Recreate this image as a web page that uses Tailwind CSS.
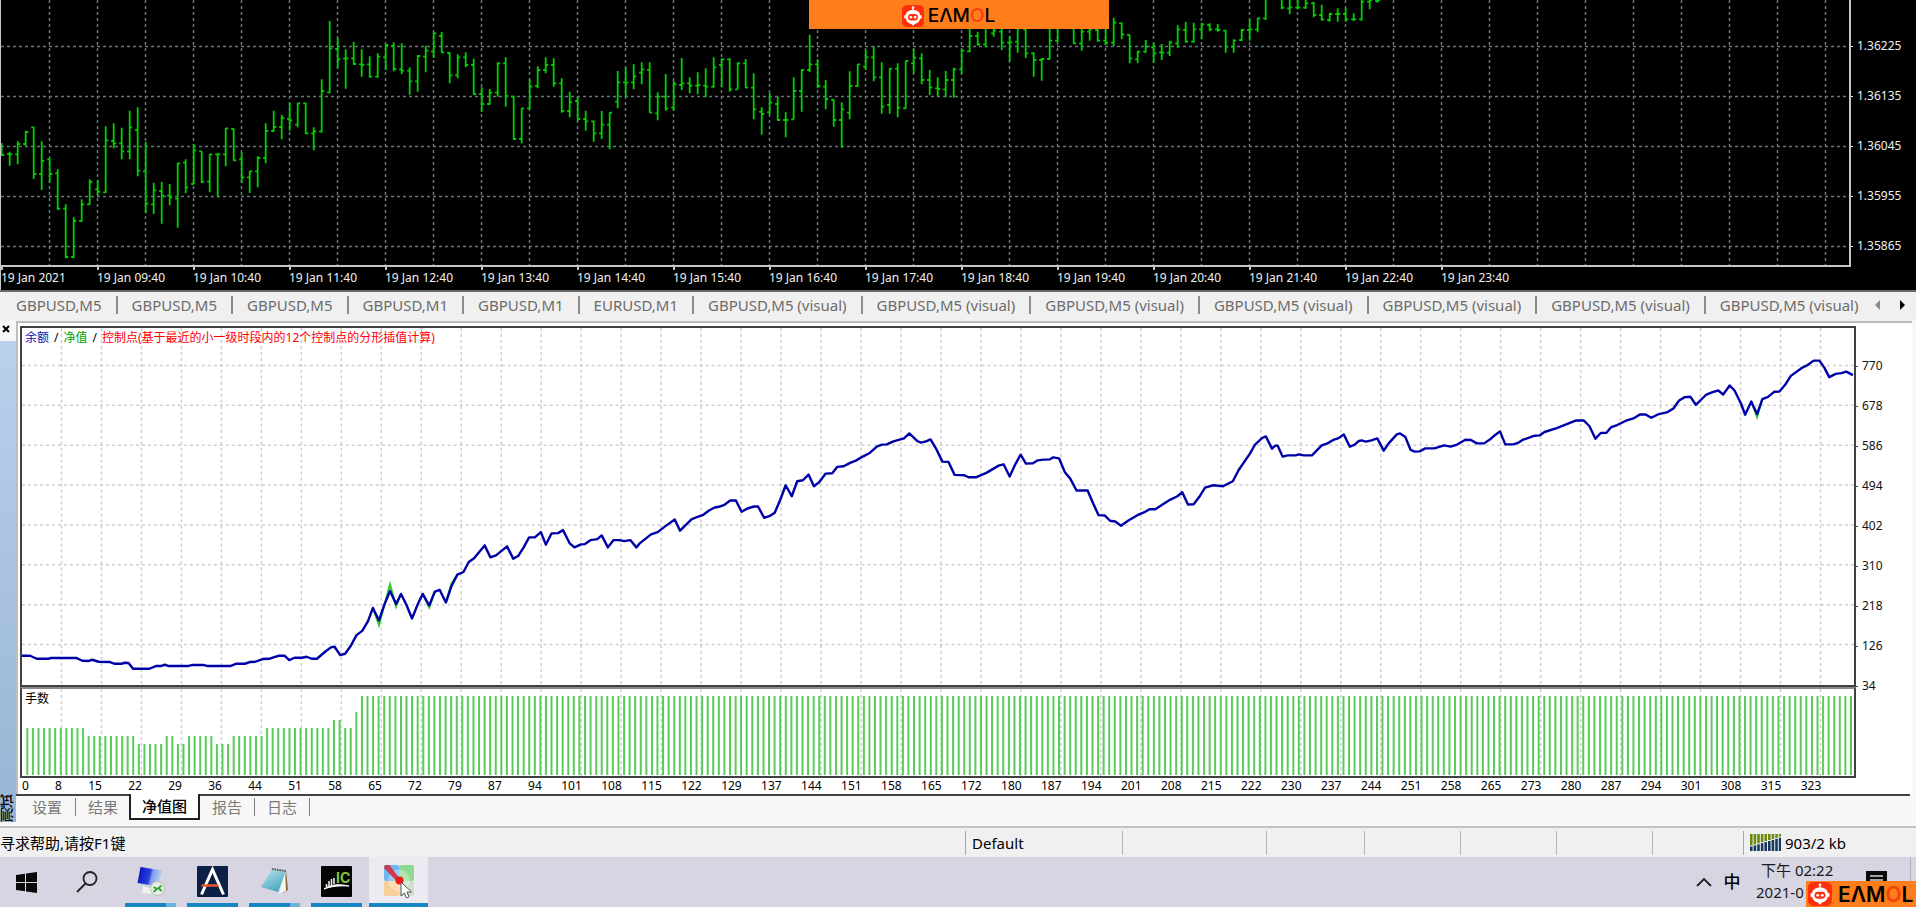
<!DOCTYPE html>
<html lang="zh-CN">
<head>
<meta charset="utf-8">
<meta name="viewport" content="width=device-width, initial-scale=1">
<title>GBPUSD,M5</title>
<script src="https://cdn.jsdelivr.net/npm/@tailwindcss/browser@4"></script>
</head>
<body class="relative flex h-screen flex-col overflow-hidden bg-[#f0f0f0] font-['Noto_Sans','Noto_Sans_CJK_SC',sans-serif] text-black">

<svg class="hidden" aria-hidden="true">
  <symbol id="robot" viewBox="0 0 22 22">
    <rect width="22" height="22" rx="5" fill="#ff2f0a"/>
    <circle cx="11" cy="2.600" r="1.3" fill="#fff"/>
    <path d="M10.4 2.500h1.200v4h-1.200z" fill="#fff"/>
    <path d="M11 5c4.600 0 6.900 2.400 7.300 5.200h1.400v3.400h-1.500c-.600 3-2.900 5.100-5.400 5.300L11 20.800l-1.800-1.900C6.700 18.700 4.400 16.600 3.800 13.600H2.300v-3.400h1.400C4.100 7.400 6.400 5 11 5z" fill="#fff"/>
    <rect x="6" y="9" width="10" height="6.400" rx="3.200" fill="#ff2f0a"/>
    <circle cx="8.900" cy="12.200" r="1.300" fill="#fff"/><circle cx="13.100" cy="12.200" r="1.300" fill="#fff"/>
  </symbol>
</svg>

<!-- Price chart -->
<section class="relative flex h-[290px] shrink-0 flex-col border-l border-[#c8c8c8] bg-black text-[12px] leading-4 text-[#f0f0f0]">
  <div class="flex h-[267px]">
    <svg id="price" class="h-full min-w-0 flex-1 border-r-2 border-b-2 border-[#c4c4c4]" role="img" aria-label="GBPUSD M5"></svg>
    <div class="flex w-[65px] shrink-0 flex-col *:flex *:before:mt-2 *:before:mr-1 *:before:h-px *:before:w-0.5 *:before:bg-[#e0e0e0]">
      <span class="-mt-3 h-[50px]">1.36315</span>
      <span class="h-[50px]">1.36225</span>
      <span class="h-[50px]">1.36135</span>
      <span class="h-[50px]">1.36045</span>
      <span class="h-[50px]">1.35955</span>
      <span>1.35865</span>
    </div>
  </div>
  <div id="times" class="flex overflow-hidden whitespace-nowrap"></div>
  <a href="#" class="absolute inset-x-0 top-0 mx-auto flex h-[29px] w-[300px] items-center justify-center gap-1 bg-[#ff7d1a] pt-0.5 pr-5" aria-label="EAMOL">
    <svg class="size-[22px]"><use href="#robot"/></svg>
    <span class="font-['Inter',sans-serif] text-[19px] leading-none font-medium text-black">EΛM<span class="text-[#f5420c]">O</span>L</span>
  </a>
</section>

<!-- Chart tabs -->
<nav class="flex h-[31px] shrink-0 items-center overflow-hidden border-t-2 border-[#6a6a6a] bg-[#f0f0f0] pb-1 text-[#6c6c6c]">
  <div id="tabs" class="flex min-w-0 flex-1 items-center overflow-hidden whitespace-nowrap"></div>
  <button class="pr-2" aria-label="前"><svg class="h-3 w-2" viewBox="0 0 8 12"><path d="M6 1v10L1 6z" fill="#8a8a8a"/></svg></button>
  <button class="mr-1.5 pr-1 pl-2" aria-label="后"><svg class="h-3 w-2" viewBox="0 0 8 12"><path d="M2 1v10l5-5z" fill="#000"/></svg></button>
</nav>

<!-- Tester panel -->
<section class="flex min-h-0 flex-1 bg-[#f7f7f7]">
  <div class="flex w-4 shrink-0 flex-col">
    <button class="flex h-5 items-start justify-center pt-1 pr-1" aria-label="关闭"><svg class="size-2" viewBox="0 0 8 8"><path d="M1 1l6 6M7 1L1 7" stroke="#000" stroke-width="2"/></svg></button>
    <div class="mb-1 flex flex-1 items-end bg-linear-to-b from-[#b9d1eb] to-[#98b4d4]">
      <span class="w-4 rotate-180 text-[14px] leading-4 font-medium [writing-mode:vertical-rl]">测试</span>
    </div>
  </div>
  <div class="flex min-w-0 flex-1 flex-col">
    <div class="mr-1 flex min-h-0 flex-1 border-t-2 border-l-2 border-[#bdbdbd] bg-white pt-[3px] pl-0.5">
      <div class="flex min-w-0 flex-1 flex-col">
        <div class="relative flex-[361] border-2 border-[#404040]">
          <svg id="equity" class="absolute inset-0 size-full" viewBox="22 328 1833 358" preserveAspectRatio="none" role="img" aria-label="净值图"></svg>
          <p class="relative flex gap-[5px] pt-0.5 pl-[3px] text-[12px] leading-4"><span class="text-[#1010b0]">余额</span> / <span class="text-[#00a000]">净值</span> / <span class="text-[#ff0000]">控制点(基于最近的小一级时段内的12个控制点的分形插值计算)</span></p>
        </div>
        <div class="relative flex-[88] border-2 border-[#404040] border-t-[#8a8a8a]">
          <svg id="lots" class="absolute inset-0 size-full" viewBox="22 688 1833 87" preserveAspectRatio="none" role="img" aria-label="手数"></svg>
          <p class="relative pt-0.5 pl-[3px] text-[12px] leading-4">手数</p>
        </div>
        <div id="trades" class="flex text-[12px] leading-4"></div>
      </div>
      <div class="flex w-[56px] shrink-0 flex-col text-[12px] text-[#111]">
        <div class="flex-[20]"></div>
        <div id="levels" class="flex flex-[360] flex-col"></div>
        <div class="flex-[88]"></div>
      </div>
    </div>
    <div class="mr-1.5 flex h-[26px] shrink-0 border-t-2 border-[#404040] text-[15px] leading-[22px] text-[#7a7a7a]">
      <div class="flex items-center pb-0.5">
        <button class="px-[13px] pl-4">设置</button><i class="h-[18px] w-px bg-[#808080]"></i>
        <button class="px-3 pr-[11px]">结果</button>
      </div>
      <button class="-mt-0.5 w-[71px] border-2 border-t-0 border-[#202020] bg-white font-medium text-black">净值图</button>
      <div class="flex items-center pb-0.5">
        <button class="px-3">报告</button><i class="h-[18px] w-px bg-[#808080]"></i>
        <button class="px-3">日志</button><i class="h-[18px] w-px bg-[#808080]"></i>
      </div>
    </div>
    <div class="h-1.5 shrink-0"></div>
  </div>
</section>

<!-- Status bar -->
<footer class="flex h-[31px] shrink-0 items-center border-t-2 border-[#c2c2c2] bg-[#f0f0f0] text-[15px] whitespace-nowrap *:h-6 *:leading-6">
  <span class="min-w-0 flex-1">寻求帮助,请按F1键</span>
  <span class="w-[157px] border-l border-[#a8a8a8] pl-1.5">Default</span>
  <span class="w-36 border-l border-[#b4b4b4]"></span>
  <span class="w-[98px] border-l border-[#b4b4b4]"></span>
  <span class="w-24 border-l border-[#b4b4b4]"></span>
  <span class="w-24 border-l border-[#b4b4b4]"></span>
  <span class="w-24 border-l border-[#b4b4b4]"></span>
  <span class="w-[91px] border-l border-[#b4b4b4]"></span>
  <span class="flex w-[173px] items-center gap-1 border-l border-[#a8a8a8] pl-[5px]"><svg id="traffic" class="h-[17px] w-8 shrink-0"></svg>903/2 kb</span>
</footer>

<!-- Taskbar -->
<div class="flex h-[50px] shrink-0 items-stretch bg-[#d6d5e1]">
  <button class="flex w-[52px] items-center justify-center" aria-label="开始">
    <svg class="size-[21px]" viewBox="0 0 21 21"><path d="M0 3l9-1.300v8.300H0zM10 1.500L21 0v10H10zM0 11h9v8.300L0 18zM10 11h11v10l-11-1.500z" fill="#0a0a0a"/></svg>
  </button>
  <button class="flex w-[70px] items-center justify-center" aria-label="搜索">
    <svg class="size-[22px]" viewBox="0 0 22 22" fill="none" stroke="#222" stroke-width="1.800"><circle cx="14" cy="7.500" r="6.500"/><path d="M9.500 12.500L1 21"/></svg>
  </button>
  <button class="relative ml-[3px] flex w-[51px] items-center justify-center border-b-4 border-[#1686c4] pt-0.5" aria-label="远程桌面">
    <svg class="size-8" viewBox="0 0 32 32">
      <defs><linearGradient id="scr" x1="0" x2="1" y1="0.300" y2="0.500"><stop offset="0" stop-color="#0a10c0"/><stop offset=".5" stop-color="#2a40dc"/><stop offset=".6" stop-color="#7d9cec"/><stop offset="1" stop-color="#c4d4f6"/></linearGradient></defs>
      <path d="M8 21l11 2 3 6-15-1z" fill="#f0f1ee"/><path d="M4 1l25 4-4 20L1 20z" fill="#d3d7d6"/>
      <path d="M5.500 2l21.500 3.500-3.500 16L2.500 18z" fill="url(#scr)"/>
      <circle cx="22.500" cy="23.500" r="7" fill="#e8ece6" stroke="#b8beb6"/><path d="M18.500 22l3.500 2-3.500 3M26.500 20.500l-3 2.500 3 3" fill="none" stroke="#2aa52a" stroke-width="1.800"/>
    </svg>
    <i class="absolute right-0 -bottom-1 h-1 w-[10px] bg-[#69b3dc]"></i>
  </button>
  <button class="ml-[11px] flex w-[51px] items-center justify-center border-b-4 border-[#1686c4] pt-0.5" aria-label="A">
    <svg class="size-[31px]" viewBox="0 0 31 31"><rect width="31" height="31" rx="1" fill="#0c1f44"/><path d="M4.500 28.500L15.500 3.500l11 25" fill="none" stroke="#fff" stroke-width="3"/><path d="M4.500 19.500h17" stroke="#f0562a" stroke-width="2.500"/></svg>
  </button>
  <button class="relative ml-[11px] flex w-[51px] items-center justify-center border-b-4 border-[#1686c4] pt-0.5" aria-label="记事本">
    <svg class="size-[30px]" viewBox="0 0 30 30">
      <defs><linearGradient id="np" x1="0" x2="0.600" y1="0" y2="1"><stop offset="0" stop-color="#c4e8f0"/><stop offset="1" stop-color="#45a5bc"/></linearGradient></defs>
      <path d="M26 4l2 20-5 3z" fill="#8a6a3a"/><path d="M25 4l1 21-7 3z" fill="#f4f6f4"/><path d="M12 3l14 2-8 21L1 21z" fill="url(#np)"/><path d="M12 3l14 2" stroke="#555" stroke-width="2" stroke-dasharray="1.500 1"/>
    </svg>
    <i class="absolute right-0 -bottom-1 h-1 w-[10px] bg-[#69b3dc]"></i>
  </button>
  <button class="ml-[11px] flex w-[51px] items-center justify-center border-b-4 border-[#1686c4] pt-0.5" aria-label="IC">
    <svg class="size-[31px]" viewBox="0 0 31 31"><rect width="31" height="31" rx="1" fill="#050505"/><text x="15" y="17" font-family="Inter" font-size="14" font-weight="700" fill="#86c440">IC</text><path d="M5.500 21v-3M8 20v-5M10.500 19v-6M13 18v-6" stroke="#e8e8e8" stroke-width="1.600"/><path d="M3 23c7-5 16-5 25-3-9-.500-17 0-25 3z" fill="#fff" stroke="#fff"/></svg>
  </button>
  <button class="relative ml-[7px] flex w-[59px] items-center justify-center border-b-4 border-[#1686c4] bg-[#ebebf1] pt-0.5" aria-label="MetaTrader">
    <svg class="h-[34px] w-8 translate-y-px" viewBox="0 0 32 34">
      <rect x="1" width="15" height="16" rx="2" fill="#6db8f2"/><rect x="16" width="15" height="16" rx="2" fill="#8fd88f"/><rect x="1" y="16" width="15" height="15" rx="2" fill="#f8cf98"/><rect x="16" y="16" width="15" height="15" rx="2" fill="#cfe0cf"/>
      <circle cx="16" cy="15.500" r="11" fill="#fff" opacity=".3"/>
      <path d="M2 0l4.500 0L17 14l-3 2.500L1 3z" fill="#d03a50"/><circle cx="16.500" cy="15.500" r="4" fill="#f01818"/>
      <path d="M18 17v14l3.300-3 2.200 5 2.600-1.200-2.200-4.800h4.600z" fill="#fff" stroke="#555"/>
    </svg>
  </button>
  <div class="flex-1"></div>
  <button class="px-2" aria-label="显示隐藏的图标"><svg class="h-[10px] w-4" viewBox="0 0 16 10"><path d="M1 9l7-7 7 7" fill="none" stroke="#222" stroke-width="1.800"/></svg></button>
  <button class="w-6 text-[17px] font-medium">中</button>
  <div class="ml-3 flex w-[89px] flex-col items-start justify-center pb-0.5 text-[15px] leading-[22px] whitespace-nowrap text-[#1a1a1a]"><span class="pl-[5px]">下午 02:22</span><span>2021-0</span></div>
  <button class="flex w-[66px] items-start justify-center border-r border-[#b0b0bc] pt-3.5 pr-0.5" aria-label="通知"><svg class="h-5 w-[21px]" viewBox="0 0 21 20"><path d="M0 0h21v16H8l-4 4v-4H0z" fill="#0a0a0a"/><path d="M4 5h13M4 9h13" stroke="#d6d5e1" stroke-width="1.500"/></svg></button>
  <span class="w-[5px]"></span>
</div>

<a href="#" class="absolute right-0 bottom-0 flex h-[26px] w-[110px] items-center gap-1.5 bg-[#ff7d1a] pl-0.5" aria-label="EAMOL">
  <svg class="size-6 shrink-0"><use href="#robot"/></svg>
  <span class="font-['Inter',sans-serif] text-[21px] leading-none font-semibold text-black">EΛM<span class="text-[#f5420c]">O</span>L</span>
</a>

<script>
const NS = 'http://www.w3.org/2000/svg';
function el(parent, name, attrs) {
  const e = document.createElementNS(NS, name);
  for (const k in attrs) e.setAttribute(k, attrs[k]);
  parent.appendChild(e);
  return e;
}

// Price bars: high, low, open, close in thirds of a pixel from the top; one bar every 8px
const bars = `430 467 465 465|455 497 462 463|424 493 463 432|392 437 432 396|380 537 382 522|424 570 522 483|475 548 478 522|508 630 520 626|613 775 626 771|652 774 771 663|598 665 663 613|538 614 613 546|540 588 568 575|379 579 577 421|370 445 423 430|383 478 430 454|332 478 454 382|322 529 390 512|425 640 514 611|548 642 613 571|546 671 573 587|552 616 587 592|488 683 596 490|478 580 488 562|432 553 552 451|454 549 454 545|462 577 545 463|460 592 463 463|384 499 463 385|386 482 387 481|456 548 478 532|512 579 532 514|469 562 514 474|370 490 474 393|332 395 393 381|344 418 381 354|308 392 357 361|308 382 374 310|308 403 310 400|382 451 400 394|238 398 394 273|63 280 277 145|113 205 147 178|148 266 176 175|126 194 175 192|148 230 193 195|169 233 193 230|160 233 230 170|132 210 172 135|127 214 138 207|130 222 208 212|202 284 212 244|166 275 244 168|137 217 170 152|97 174 155 100|96 158 108 157|157 250 159 226|163 235 226 172|157 202 172 195|176 284 195 282|262 336 282 312|267 314 312 278|187 290 278 190|172 320 190 288|287 420 290 417|324 430 417 325|238 328 325 260|199 265 258 210|172 220 210 195|175 260 195 250|235 338 250 333|275 352 333 307|292 362 303 357|332 392 357 364|362 425 364 400|333 417 400 374|337 448 374 338|213 325 305 247|202 292 247 248|193 268 247 229|187 253 218 208|187 338 210 338|277 361 340 290|222 332 290 325|243 332 323 252|174 270 255 250|232 280 250 257|217 283 257 255|205 292 257 260|172 263 260 202|175 262 195 178|175 275 178 268|187 268 268 190|177 265 190 263|220 358 263 328|322 404 335 342|280 343 337 308|290 362 312 360|337 412 360 360|232 358 358 273|208 335 273 210|104 216 210 193|178 265 193 258|240 328 260 297|298 380 300 360|307 443 360 328|214 358 338 258|192 260 258 193|150 210 200 172|139 244 172 232|187 341 232 320|205 341 315 206|190 352 206 323|182 326 325 183|146 220 190 173|160 253 175 240|210 285 240 262|232 290 265 267|213 292 268 240|203 293 240 208|148 223 208 152|85 157 154 108|95 137 108 133|70 142 133 80|70 110 100 92|80 150 95 128|108 184 128 127|70 158 125 85|80 174 88 160|157 230 160 180|175 242 180 177|70 178 177 122|70 127 122 80|60 80 75 75|70 132 85 130|85 152 130 95|70 122 95 88|80 125 90 122|75 135 122 128|53 138 128 68|67 118 70 103|104 190 105 175|152 190 178 155|120 158 155 140|128 188 142 160|132 180 157 158|122 168 158 127|76 143 130 88|66 128 90 125|68 128 125 88|68 118 88 73|70 94 75 88|72 95 88 90|90 158 92 140|118 158 140 122|87 123 120 90|58 122 90 88|53 97 88 55|-9 60 55 -9|-9 0 -9 -9|-9 28 -9 23|-9 43 25 22|-9 28 23 23|-9 27 23 10|5 52 10 45|14 62 45 58|38 65 60 42|25 65 42 42|25 65 42 58|40 63 58 58|-9 62 58 5|-9 28 5 0|-9 8 3 0`;

const price = document.getElementById('price');
for (let i = 0; i < 60; i++) el(price, 'path', {d: `M${48.5 + 48 * i} 0V267`, stroke: '#66757f', 'stroke-width': 1.5, 'stroke-dasharray': '3 3'});
for (let i = 0; i < 5; i++) el(price, 'path', {d: `M0 ${46.5 + 50 * i}H2880`, stroke: '#66757f', 'stroke-width': 1.5, 'stroke-dasharray': '3 3'});
let d = '';
bars.split('|').forEach((b, i) => {
  const [h, l, o, c] = b.split(' ').map(v => v / 3);
  const x = 0.7 + 8 * i;
  d += `M${x} ${h}V${l}M${x - 2.5} ${o}H${x}M${x} ${c}H${x + 2.5}`;
});
el(price, 'path', {d, stroke: '#00d000', 'stroke-width': 1.8, fill: 'none'});

const times = document.getElementById('times');
['2021', '09:40', '10:40', '11:40', '12:40', '13:40', '14:40', '15:40', '16:40', '17:40', '18:40', '19:40', '20:40', '21:40', '22:40', '23:40'].forEach(t => {
  const s = document.createElement('span');
  s.className = 'w-24 shrink-0 before:block before:h-[3px] before:w-0.5 before:bg-[#c4c4c4]';
  s.textContent = '19 Jan ' + t;
  times.appendChild(s);
});

const tabs = document.getElementById('tabs');
['GBPUSD,M5', 'GBPUSD,M5', 'GBPUSD,M5', 'GBPUSD,M1', 'GBPUSD,M1', 'EURUSD,M1', ...Array(7).fill('GBPUSD,M5 (visual)')].forEach((t, i) => {
  const b = document.createElement('button');
  b.className = (i ? 'border-l-2 ' : 'ml-0.5 ') + 'shrink-0 border-[#8c8c8c] px-3.5 text-[15px] leading-[18px]';
  b.textContent = t;
  tabs.appendChild(b);
});

// Balance curve: traces made of an x start and "x,y" points
const curve = [
  [0, '52,1010 74,1010 90,1019 118,1019 124,1017 188,1017 202,1025 216,1026 226,1022 242,1028 270,1029 280,1034 298,1034 306,1031 315,1032 326,1049 366,1049 382,1041 394,1041 404,1037 414,1041 460,1041 470,1038 500,1038 510,1041 564,1041 580,1034 600,1034 612,1029 626,1028 644,1020 660,1019 672,1014 684,1010 698,1010 709,1023 722,1016 740,1016 752,1013 764,1019 777,1019 797,998 812,984 820,983 834,1008 846,1004 860,980 874,948 888,935 902,906 914,866 929,904 941,860 956,815 971,854 983,824 996,856 1010,898 1024,855 1036,824 1052,859 1066,817 1078,812 1093,850 1107,800 1121,766 1136,758 1149,728 1162,717 1188,678 1202,714 1216,708 1243,681 1258,718 1270,710 1284,683 1297,654 1311,654 1326,638 1338,676 1352,642 1368,641 1380,632 1396,671 1408,684 1424,675 1434,674 1448,662 1464,659 1475,648 1490,684 1504,662 1518,662 1530,665 1545,662 1560,684'],
  [1568, '0,672 28,645 44,638 60,623 86,600 99,634 127,600 142,592 156,586 170,573 184,564 194,562 208,556 222,543 236,543 250,577 264,567 280,561 290,561 305,595 318,590 331,580 345,540 358,497 373,530 386,485 400,482 414,465 427,500 440,488 456,462 472,461 484,442 500,440 516,430 530,423 548,410 564,400 582,380 594,375 606,374 622,365 648,356 661,341 680,364 690,369 702,365 713,359 728,390 742,426 757,427 772,466 796,467 806,473 824,473 850,460 880,438 892,434 907,471 920,436 934,405 947,432 964,431 976,422 990,420 1006,419 1014,413 1028,416 1042,457 1056,478 1071,513 1098,513 1112,553 1125,587 1140,588 1153,604 1166,606 1180,619 1198,603 1220,587 1236,579 1250,569 1264,569 1300,541 1318,530 1330,518 1344,555 1358,554 1372,532 1386,504 1406,497 1430,500 1454,485 1468,452 1496,402 1508,376 1526,355 1535,350 1550,387'],
  [3126, '0,378 6,378 18,411 30,407 50,407 58,404 70,407 90,407 114,377 128,371 142,361 154,356 168,344 183,381 194,376 205,364 212,362 222,366 236,362 250,356 266,393 278,371 298,344 306,341 319,352 332,391 342,396 354,395 368,386 390,386 414,377 430,381 444,376 466,360 480,361 494,371 512,371 528,358 540,345 551,335 564,374 584,374 596,369 606,361 636,348 648,347 660,337 690,325 738,302 756,302 770,319 785,357 798,340 812,339 824,322 838,316 860,303 880,295 894,284 908,284 922,294 938,284 962,277 976,266 990,242 1004,232 1018,231 1031,255 1057,224 1072,217 1086,212 1098,224 1114,197 1126,212 1142,252 1152,285 1167,245 1181,283 1194,238 1208,231 1223,216 1236,215 1250,195 1264,168 1290,145 1304,136 1320,122 1334,122 1346,143 1358,172 1374,162 1388,160 1400,155 1416,166']
];
const toPoints = traces => traces.map(([x0, s]) => s.split(' ').map(p => {
  const [x, y] = p.split(',').map(Number);
  return ((x + x0) / 2.45).toFixed(1) + ',' + (320 + y / 3).toFixed(1);
}).join(' ')).join(' ');

const equity = document.getElementById('equity');
const lots = document.getElementById('lots');
const grid = {stroke: '#cfcfcf', 'stroke-width': 1.5, 'stroke-dasharray': '3 3'};
for (let i = 0; i < 45; i++) {
  el(equity, 'path', {d: `M${61.5 + 40 * i} 328V686`, ...grid});
  el(lots, 'path', {d: `M${61.5 + 40 * i} 688V775`, ...grid});
}
for (let i = 0; i < 8; i++) el(equity, 'path', {d: `M22 ${365.5 + 40 * i}H1855`, ...grid});
[[0, '914,866 929,918 956,795 971,862 983,824'], [0, '1036,824 1052,865 1066,817'], [0, '1093,850 1106,795 1121,766'], [3126, '1167,245 1181,292 1194,238']].forEach(t =>
  el(equity, 'polyline', {points: toPoints([t]), fill: 'none', stroke: '#30c830', 'stroke-width': 2}));
el(equity, 'polyline', {points: toPoints(curve), fill: 'none', stroke: '#0000a8', 'stroke-width': 2.4, 'stroke-linejoin': 'round'});

// Lot size per trade: [last trade index, top]
const runs = [[10, 727], [19, 735], [24, 743], [26, 735], [28, 743], [33, 735], [36, 743], [42, 735], [54, 727], [56, 719], [58, 727], [59, 711], [327, 695]];
let ld = '', k = 0;
for (const [last, top] of runs) for (; k <= last; k++) ld += `M${(27.3 + 5.58 * k).toFixed(1)} 774V${top}`;
el(lots, 'path', {d: ld, stroke: '#58cc58', 'stroke-width': 2});

// Trade numbers, right-aligned to the grid lines
const trades = document.getElementById('trades');
[8,15,22,29,36,44,51,58,65,72,79,87,94,101,108,115,122,129,137,144,151,158,165,172,180,187,194,201,208,215,222,230,237,244,251,258,265,273,280,287,294,301,308,315,323].forEach((n, i) => {
  const c = document.createElement('span');
  c.className = 'flex min-w-0 flex-[40] justify-end';
  if (!i) { c.className = 'flex min-w-0 flex-[40] justify-between pl-0.5'; c.innerHTML = '<span>0</span>'; }
  c.insertAdjacentHTML('beforeend', `<span>${n}</span>`);
  trades.appendChild(c);
});
trades.insertAdjacentHTML('beforeend', '<span class="flex-[35]"></span>');

for (const v of [770, 678, 586, 494, 402, 310, 218, 126, 34])
  document.getElementById('levels').insertAdjacentHTML('beforeend', `<span class="flex flex-1 items-center before:mr-1 before:h-px before:w-0.5 before:bg-[#404040]">${v}</span>`);

const traffic = document.getElementById('traffic');
for (let i = 0; i < 9; i++) {
  const x = 1 + i * 3.6, y = 12 - i * 1.1;
  el(traffic, 'rect', {x, y: 0, width: 2.6, height: y - 0.5, fill: '#6b8a10'});
  el(traffic, 'rect', {x, y: y + 0.5, width: 2.6, height: 16.5 - y, fill: '#173a5c'});
}
</script>
</body>
</html>
